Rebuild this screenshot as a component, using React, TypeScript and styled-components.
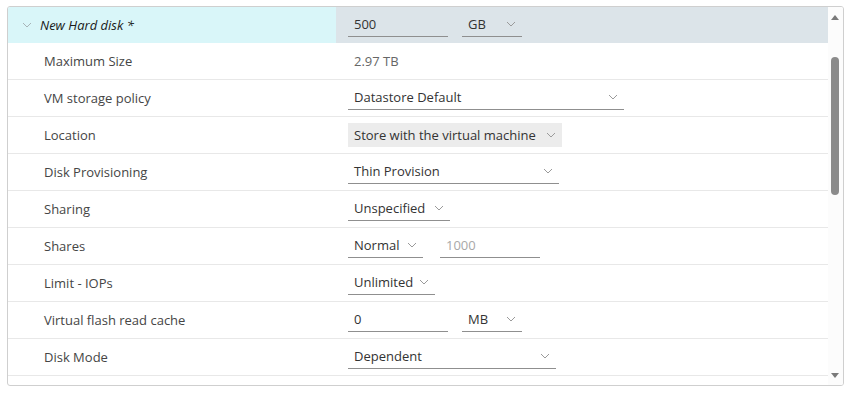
import React from "react";
import styled, { createGlobalStyle } from "styled-components";

const Global = createGlobalStyle`
  html, body { margin: 0; padding: 0; background: #fff; }
  body { font-family: "Open Sans", "Liberation Sans", sans-serif; font-size: 13px; color: #333; }
`;

const Frame = styled.div`
  margin: 6px 0 0 7px;
  width: 837px;
  height: 380px;
  box-sizing: border-box;
  border: 1px solid #cfcfcf;
  border-radius: 3px;
  display: flex;
  overflow: hidden;
`;

const Content = styled.div`
  flex: 1;
  overflow: hidden;
`;

const Row = styled.div<{ $header?: boolean }>`
  display: grid;
  grid-template-columns: 328px 1fr;
  height: ${(p) => (p.$header ? "36px" : "37px")};
  box-sizing: border-box;
  border-bottom: ${(p) => (p.$header ? "none" : "1px solid #e8e8e8")};
`;

const Label = styled.div<{ $header?: boolean }>`
  display: flex;
  align-items: center;
  padding-left: ${(p) => (p.$header ? "14px" : "36px")};
  padding-bottom: 1px;
  box-sizing: border-box;
  background: ${(p) => (p.$header ? "#d9f6f9" : "transparent")};
  color: ${(p) => (p.$header ? "#1a1a1a" : "#454545")};
  font-style: ${(p) => (p.$header ? "italic" : "normal")};
  gap: 8px;
`;

const Value = styled.div<{ $header?: boolean; $gap?: number }>`
  display: flex;
  align-items: center;
  padding-left: 12px;
  gap: ${(p) => p.$gap ?? 14}px;
  background: ${(p) => (p.$header ? "#dce4e9" : "transparent")};
`;

const Static = styled.span`
  color: #666;
  padding-left: 6px;
  padding-bottom: 1px;
`;

const Field = styled.div<{ $w: number; $placeholder?: boolean; $disabled?: boolean }>`
  width: ${(p) => p.$w}px;
  height: 24px;
  box-sizing: border-box;
  display: flex;
  align-items: center;
  justify-content: space-between;
  padding: 0 6px 1px;
  border-bottom: ${(p) => (p.$disabled ? "none" : "1px solid #8f8f8f")};
  background: ${(p) => (p.$disabled ? "#ececec" : "transparent")};
  color: ${(p) => (p.$placeholder ? "#a8a8a8" : "#333")};
`;

const Chev = ({ color = "#9a9a9a" }: { color?: string }) => (
  <svg width="10" height="6" viewBox="0 0 10 6" style={{ flexShrink: 0 }}>
    <path d="M1 1 L5 5 L9 1" fill="none" stroke={color} strokeWidth="1" />
  </svg>
);

const Select = ({ w, text, disabled }: { w: number; text: string; disabled?: boolean }) => (
  <Field $w={w} $disabled={disabled}>
    <span>{text}</span>
    <Chev />
  </Field>
);

const ScrollBar = styled.div`
  width: 15px;
  position: relative;
  background: #fcfcfc;
`;

const Thumb = styled.div`
  position: absolute;
  left: 3px;
  top: 50px;
  width: 8px;
  height: 138px;
  border-radius: 4px;
  background: #8b8b8b;
`;

const Arrow = styled.div<{ $down?: boolean }>`
  position: absolute;
  left: 3px;
  ${(p) => (p.$down ? "bottom: 7px;" : "top: 8px;")}
  width: 0;
  height: 0;
  border-left: 4px solid transparent;
  border-right: 4px solid transparent;
  ${(p) => (p.$down ? "border-top: 5px solid #7a7a7a;" : "border-bottom: 5px solid #7a7a7a;")}
`;

export default function App() {
  return (
    <>
      <Global />
      <Frame>
        <Content>
          <Row $header>
            <Label $header>
              <Chev color="#a8b4b8" />
              <span>New Hard disk *</span>
            </Label>
            <Value $header>
              <Field $w={100}>500</Field>
              <Select w={60} text="GB" />
            </Value>
          </Row>
          <Row>
            <Label>Maximum Size</Label>
            <Value><Static>2.97 TB</Static></Value>
          </Row>
          <Row>
            <Label>VM storage policy</Label>
            <Value><Select w={276} text="Datastore Default" /></Value>
          </Row>
          <Row>
            <Label>Location</Label>
            <Value><Select w={214} text="Store with the virtual machine" disabled /></Value>
          </Row>
          <Row>
            <Label>Disk Provisioning</Label>
            <Value><Select w={211} text="Thin Provision" /></Value>
          </Row>
          <Row>
            <Label>Sharing</Label>
            <Value><Select w={102} text="Unspecified" /></Value>
          </Row>
          <Row>
            <Label>Shares</Label>
            <Value $gap={17}>
              <Select w={75} text="Normal" />
              <Field $w={100} $placeholder>1000</Field>
            </Value>
          </Row>
          <Row>
            <Label>Limit - IOPs</Label>
            <Value><Select w={87} text="Unlimited" /></Value>
          </Row>
          <Row>
            <Label>Virtual flash read cache</Label>
            <Value>
              <Field $w={100}>0</Field>
              <Select w={60} text="MB" />
            </Value>
          </Row>
          <Row>
            <Label>Disk Mode</Label>
            <Value><Select w={208} text="Dependent" /></Value>
          </Row>
          <Row>
            <Label />
            <Value />
          </Row>
        </Content>
        <ScrollBar>
          <Arrow />
          <Thumb />
          <Arrow $down />
        </ScrollBar>
      </Frame>
    </>
  );
}
